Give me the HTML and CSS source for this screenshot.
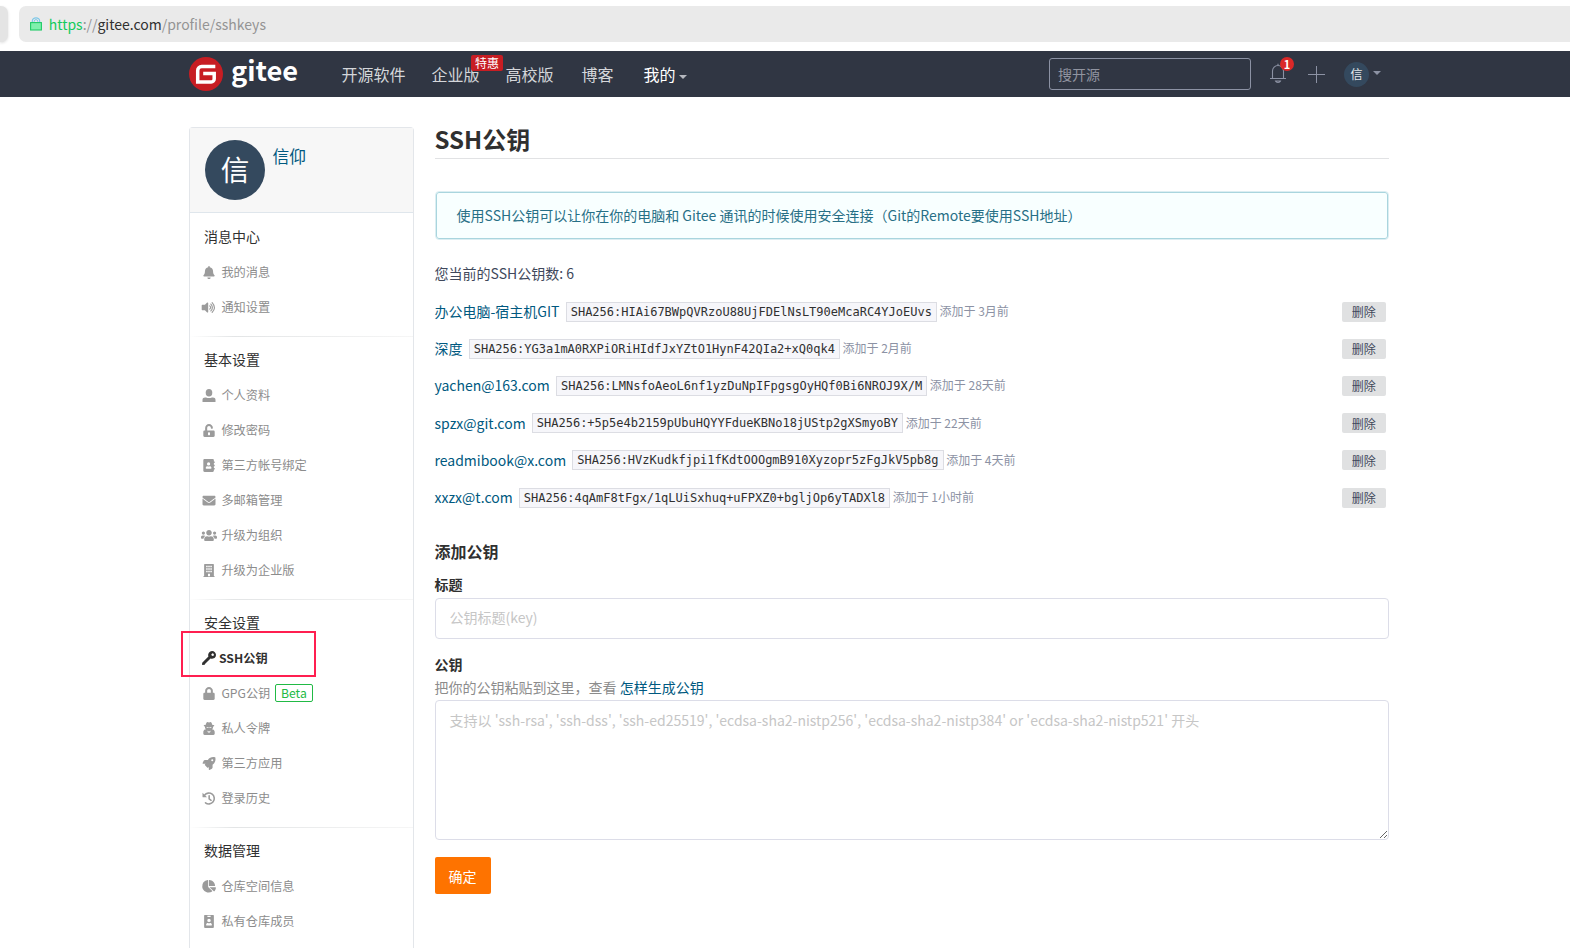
FILE: index.html
```html
<!DOCTYPE html>
<html lang="zh-CN">
<head>
<meta charset="utf-8">
<title>SSH公钥 - Gitee</title>
<link rel="stylesheet" href="styles.css">
</head>
<body>
<div class="browser">
  <div class="browser-tab"></div>
  <div class="address">
    <svg class="address-lock" viewBox="0 0 12 14"><path d="M2.300 6V4.200a3.700 3.400 0 0 1 7.400 0V6" fill="none" stroke="#7fc8e8" stroke-width="1.200"/><path d="M4.200 6V4.400a1.800 1.800 0 0 1 3.600 0V6" fill="none" stroke="#7fc8e8" stroke-width="1"/><rect x=".6" y="5.600" width="10.800" height="7.400" fill="#7ff0ac" stroke="#1fcb66" stroke-width="1.100"/></svg>
    <span class="url"><span class="url-scheme">https</span>://<span class="url-host">gitee.com</span>/profile/sshkeys</span>
  </div>
</div>
<header class="nav">
  <div class="nav-inner">
    <svg class="logo-mark" viewBox="0 0 34 34"><circle cx="17" cy="17" r="17" fill="#c71d23"/><path d="M26.300 9.600H12.700a4 4 0 0 0-4 4v11.300h13.500a3 3 0 0 0 3-3v-5.300H14.200" fill="none" stroke="#fff" stroke-width="3.500"/></svg>
    <span class="logo-text">gitee</span>
    <nav class="menu">
      <a class="menu-item">开源软件</a>
      <a class="menu-item">企业版<span class="promo">特惠</span></a>
      <a class="menu-item">高校版</a>
      <a class="menu-item">博客</a>
      <a class="menu-item menu-mine">我的<i class="caret"></i></a>
    </nav>
    <div class="search">搜开源</div>
    <div class="bell">
      <svg viewBox="0 0 18 22" width="18" height="22"><path d="M1 16.500h16M3.500 16.500V9a5.500 5.500 0 0 1 11 0v7.500M9 3.500V1.800M6.500 19a2.600 2 0 0 0 5 0z" fill="none" stroke="#8c92a4" stroke-width="1.100"/></svg>
      <span class="bell-count">1</span>
    </div>
    <svg class="plus" viewBox="0 0 17 17"><path d="M0 8.500h17M8.500 0v17" stroke="#8c92a4" stroke-width="1"/></svg>
    <span class="nav-avatar">信</span><i class="caret caret-dim"></i>
  </div>
</header>
<div class="page">
  <aside class="sidebar">
    <div class="profile"><span class="avatar">信</span><a class="profile-name">信仰</a></div>
    <section class="group">
      <h2>消息中心</h2>
      <a class="item"><svg class="icon" viewBox="0 0 448 512"><path d="M224 512c35.320 0 63.970-28.650 63.970-64H160.030c0 35.350 28.650 64 63.970 64zm215.390-149.710c-19.320-20.760-55.470-51.990-55.470-154.290 0-77.700-54.480-139.900-127.940-155.160V32c0-17.670-14.320-32-31.980-32s-31.980 14.330-31.980 32v20.840C118.560 68.100 64.080 130.300 64.080 208c0 102.300-36.150 133.530-55.470 154.290-6 6.450-8.660 14.160-8.610 21.710.11 16.400 12.980 32 32.100 32h383.800c19.120 0 32-15.600 32.100-32 .05-7.550-2.610-15.270-8.610-21.710z"/></svg>我的消息</a>
      <a class="item"><svg class="icon" viewBox="0 0 576 512"><path d="M0 176v160c0 13 11 24 24 24h103l88 89c15 15 41 4 41-17V80c0-21-26-32-41-17l-88 89H24c-13 0-24 11-24 24z"/><path d="M318 190q66 66 0 132M362 120q118 136 0 272M412 62q176 194 0 388" fill="none" stroke="currentColor" stroke-width="44" stroke-linecap="round"/></svg>通知设置</a>
    </section>
    <section class="group">
      <h2>基本设置</h2>
      <a class="item"><svg class="icon" viewBox="0 0 512 512"><ellipse cx="256" cy="150" rx="130" ry="150"/><path d="M0 512v-90c0-55 45-90 100-90h40c70 32 162 32 232 0h40c55 0 100 35 100 90v90z"/></svg>个人资料</a>
      <a class="item"><svg class="icon" viewBox="0 0 448 512"><path fill-rule="evenodd" d="M400 256H152V152.900c0-39.600 31.700-72.500 71.300-72.900 40-.4 72.700 32.100 72.700 72v8c0 13.300 10.700 24 24 24h32c13.300 0 24-10.700 24-24v-8C376 68 307.500-.3 223.500 0 139.500.3 72 69.500 72 153.500V256H48c-26.500 0-48 21.500-48 48v160c0 26.500 21.500 48 48 48h352c26.500 0 48-21.500 48-48V304c0-26.500-21.500-48-48-48zM264 408c0 22-18 40-40 40s-40-18-40-40v-48c0-22 18-40 40-40s40 18 40 40z"/></svg>修改密码</a>
      <a class="item"><svg class="icon" viewBox="0 0 448 512"><path fill-rule="evenodd" d="M436 160c7 0 12-5 12-12v-40c0-7-5-12-12-12h-20V48c0-27-21-48-48-48H48C21 0 0 21 0 48v416c0 27 21 48 48 48h320c27 0 48-21 48-48v-48h20c7 0 12-5 12-12v-40c0-7-5-12-12-12h-20v-64h20c7 0 12-5 12-12v-40c0-7-5-12-12-12h-20v-64zM208 128a64 64 0 1 1 0 128 64 64 0 0 1 0-128zm112 237c0 11-10 19-22 19H118c-12 0-22-8-22-19v-19c0-32 30-58 67-58 30 12 60 12 90 0 37 0 67 26 67 58z"/></svg>第三方帐号绑定</a>
      <a class="item"><svg class="icon" viewBox="0 0 512 512"><path d="M502.300 190.800c3.900-3.100 9.700-.2 9.700 4.700V400c0 26.500-21.500 48-48 48H48c-26.500 0-48-21.500-48-48V195.600c0-5 5.700-7.800 9.700-4.700 22.400 17.400 52.100 39.500 154.100 113.600 21.100 15.400 56.700 47.800 92.200 47.600 35.700.3 72-32.800 92.300-47.600 102-74.100 131.600-96.300 154-113.700zM256 320c23.200.4 56.600-29.200 73.400-41.400 132.700-96.300 142.800-104.700 173.400-128.700 5.800-4.500 9.200-11.500 9.200-18.900v-19c0-26.500-21.500-48-48-48H48c-26.500 0-48 21.500-48 48v19c0 7.400 3.400 14.300 9.200 18.900 30.600 23.900 40.700 32.400 173.400 128.700 16.800 12.200 50.200 41.800 73.400 41.400z"/></svg>多邮箱管理</a>
      <a class="item"><svg class="icon" viewBox="0 0 640 512"><path d="M96 224c35.300 0 64-28.700 64-64s-28.700-64-64-64-64 28.700-64 64 28.700 64 64 64zm448 0c35.300 0 64-28.700 64-64s-28.700-64-64-64-64 28.700-64 64 28.700 64 64 64zm32 32h-64c-17.600 0-33.500 7.100-45.100 18.600 40.300 22.100 68.900 62 75.100 109.400h66c17.700 0 32-14.300 32-32v-32c0-35.300-28.700-64-64-64zm-256 0c61.900 0 112-50.100 112-112S381.900 32 320 32 208 82.100 208 144s50.100 112 112 112zm76.800 32h-8.300c-20.800 10-43.900 16-68.500 16s-47.600-6-68.500-16h-8.300C179.600 288 128 339.600 128 403.200V432c0 26.500 21.500 48 48 48h288c26.500 0 48-21.500 48-48v-28.800c0-63.600-51.600-115.200-115.200-115.200zm-223.700-13.400C161.500 263.100 145.600 256 128 256H64c-35.300 0-64 28.700-64 64v32c0 17.700 14.300 32 32 32h65.900c6.300-47.400 34.900-87.300 75.200-109.400z"/></svg>升级为组织</a>
      <a class="item"><svg class="icon" viewBox="0 0 448 512"><path fill-rule="evenodd" d="M436 480h-20V24c0-13-11-24-24-24H56C43 0 32 11 32 24v456H12c-7 0-12 5-12 12v20h448v-20c0-7-5-12-12-12zM112 72h60v56h-60zm82 0h60v56h-60zm82 0h60v56h-60zM112 168h60v56h-60zm82 0h60v56h-60zm82 0h60v56h-60zM112 264h60v56h-60zm82 0h60v56h-60zm82 0h60v56h-60zM184 384h80v96h-80z"/></svg>升级为企业版</a>
    </section>
    <section class="group">
      <h2>安全设置</h2>
      <a class="item item-active"><svg class="icon" viewBox="0 0 512 512"><path fill-rule="evenodd" d="M470 42c52 52 56 132 12 188-42 52-112 64-170 42L118 466l-20 38-82 8-16-16 8-62 226-230C212 146 228 82 278 38c58-48 140-46 192 4zM362 96a46 46 0 1 0 64 64 46 46 0 0 0-64-64z"/></svg>SSH公钥</a>
      <a class="item"><svg class="icon" viewBox="0 0 448 512"><path d="M400 224h-24v-72C376 68.200 307.800 0 224 0S72 68.200 72 152v72H48c-26.500 0-48 21.500-48 48v192c0 26.500 21.500 48 48 48h352c26.500 0 48-21.500 48-48V272c0-26.500-21.500-48-48-48zm-104 0H152v-72c0-39.700 32.300-72 72-72s72 32.300 72 72v72z"/></svg>GPG公钥<span class="beta">Beta</span></a>
      <a class="item"><svg class="icon" viewBox="0 0 448 512"><path fill-rule="evenodd" d="M16 144c0-18 48-28 80-34C108 62 130 0 160 0c22 0 38 16 64 16S266 0 288 0c30 0 52 62 64 110 32 6 80 16 80 34 0 16-22 28-48 36v24c0 30-12 52-30 68l-4 20h28c40 12 70 54 70 96v76c0 26-22 48-48 48H48c-26 0-48-22-48-48v-76c0-42 30-84 66-96h30l-4-20c-16-16-28-38-28-68v-24c-26-8-48-20-48-36zm106 66c14 22 70 24 86-6h32c16 30 72 28 86 6v-16H122zm38 136 34 100 24-60-18-34zm128 0-40 6-18 34 24 60z"/></svg>私人令牌</a>
      <a class="item"><svg class="icon" viewBox="0 0 512 512"><path fill-rule="evenodd" d="M505 20c-1-7-6-11-13-13-115-24-205 6-282 108H94c-16 0-35 11-42 26L3 238c-7 14 1 26 17 26h102l-22 22c-11 11-12 31 0 42l84 84c12 12 31 12 42 0l22-22v102c0 16 12 24 26 17l97-49c15-7 26-26 26-42V302C499 225 529 135 505 20zM384 168a40 40 0 1 1 0-80 40 40 0 0 1 0 80z"/></svg>第三方应用</a>
      <a class="item"><svg class="icon" viewBox="0 0 512 512"><path d="M80 125A214 214 0 1 1 118 424M262 145v122l76 58" fill="none" stroke="currentColor" stroke-width="62" stroke-linecap="round"/><path d="M0 32v152c0 13 11 24 24 24h152z"/></svg>登录历史</a>
    </section>
    <section class="group group-last">
      <h2>数据管理</h2>
      <a class="item"><svg class="icon" viewBox="0 0 544 512"><path d="M240 272V16c0-9-8-17-17-16A240 240 0 0 0 6 279c19 125 128 221 254 217 49-2 95-18 133-44 8-6 8-17 1-24z"/><path d="M544 288H290l170 158c6 6 16 7 23 1 33-31 55-75 61-141 1-10-7-18-16-18zM512 223C504 105 407 8 289 0c-9 0-17 7-17 16v224h224c9 0 17-8 16-17z"/></svg>仓库空间信息</a>
      <a class="item"><svg class="icon" viewBox="0 0 448 512"><path fill-rule="evenodd" d="M384 0H64C37 0 32 21 32 48v416c0 27 5 48 32 48h320c27 0 32-21 32-48V48c0-27-5-48-32-48zM160 32h128v48H160zm64 112a68 68 0 1 1 0 136 68 68 0 0 1 0-136zm112 250c0 12-10 22-22 22H134c-12 0-22-10-22-22v-22c0-34 30-60 67-60 30 12 60 12 90 0 37 0 67 26 67 60z"/></svg>私有仓库成员</a>
    </section>
    <div class="marker"></div>
  </aside>
  <main class="main">
    <h1>SSH公钥</h1>
    <div class="notice">使用SSH公钥可以让你在你的电脑和 Gitee 通讯的时候使用安全连接（Git的Remote要使用SSH地址）</div>
    <p class="count">您当前的SSH公钥数: 6</p>
    <ul class="keys">
      <li><a>办公电脑-宿主机GIT</a><code>SHA256:HIAi67BWpQVRzoU88UjFDElNsLT90eMcaRC4YJoEUvs</code><span class="when">添加于 3月前</span><button>删除</button></li>
      <li><a>深度</a><code>SHA256:YG3a1mA0RXPiORiHIdfJxYZtO1HynF42QIa2+xQ0qk4</code><span class="when">添加于 2月前</span><button>删除</button></li>
      <li><a>yachen@163.com</a><code>SHA256:LMNsfoAeoL6nf1yzDuNpIFpgsgOyHQf0Bi6NROJ9X/M</code><span class="when">添加于 28天前</span><button>删除</button></li>
      <li><a>spzx@git.com</a><code>SHA256:+5p5e4b2159pUbuHQYYFdueKBNo18jUStp2gXSmyoBY</code><span class="when">添加于 22天前</span><button>删除</button></li>
      <li><a>readmibook@x.com</a><code>SHA256:HVzKudkfjpi1fKdtOOOgmB910Xyzopr5zFgJkV5pb8g</code><span class="when">添加于 4天前</span><button>删除</button></li>
      <li><a>xxzx@t.com</a><code>SHA256:4qAmF8tFgx/1qLUiSxhuq+uFPXZ0+bgljOp6yTADXl8</code><span class="when">添加于 1小时前</span><button>删除</button></li>
    </ul>
    <form class="form">
      <h3>添加公钥</h3>
      <label>标题</label>
      <input type="text" placeholder="公钥标题(key)">
      <label class="label-key">公钥</label>
      <p class="help">把你的公钥粘贴到这里，查看 <a>怎样生成公钥</a></p>
      <textarea placeholder="支持以 'ssh-rsa', 'ssh-dss', 'ssh-ed25519', 'ecdsa-sha2-nistp256', 'ecdsa-sha2-nistp384' or 'ecdsa-sha2-nistp521' 开头"></textarea>
      <button class="submit" type="button">确定</button>
    </form>
  </main>
</div>
</body>
</html>
```

FILE: styles.css
```css
* { box-sizing: border-box; }
body {
  margin: 0;
  height: 948px;
  overflow: hidden;
  background: #fff;
  color: #40485b;
  font: 14px/20px "Noto Sans CJK SC", sans-serif;
}
h1, h2, h3, p, ul { margin: 0; padding: 0; }
button, input, textarea { font-family: inherit; }

.browser { display: flex; height: 51px; padding-top: 6px; gap: 11px; }
.browser-tab { width: 8px; height: 36px; background: #e4e4e4; border-radius: 0 7px 7px 0; box-shadow: 0 1px 3px #ddd; }
.address { flex: 1; display: flex; align-items: center; height: 36px; padding-left: 10.5px; background: #eaeaea; border-radius: 7px 0 0 7px; }
.address-lock { width: 12px; height: 14px; }
.url { margin-left: 7.2px; color: #949494; }
.url-scheme { color: #14cb5c; }
.url-host { color: #303030; }

.nav { height: 46px; background: #303643; }
.nav-inner { display: flex; align-items: center; height: 46px; margin-left: 189px; width: 1200px; }
.logo-mark { width: 34px; height: 34px; }
.logo-text { width: 110.4px; margin-left: 8px; padding-bottom: 10px; color: #fff; font-size: 27.2px; font-weight: 700; line-height: 36px; }
.menu { display: flex; flex: 1; color: #d4d6da; font-size: 16px; line-height: 45px; }
.menu-item { position: relative; margin-right: 26px; }
.menu-item:nth-child(3) { margin-right: 28px; }
.menu-item:nth-child(4) { margin-right: 30px; }
.menu-mine { color: #fff; }
.promo { position: absolute; left: 39.5px; top: 3px; width: 32px; height: 16px; border-radius: 2px; background: #c71d23; color: #fff; font-size: 12px; line-height: 15px; text-align: center; }
.caret { display: inline-block; border: 4px solid transparent; border-top-color: #b5b8bf; border-bottom: 0; margin-left: 4px; vertical-align: 2px; }
.search { width: 202px; height: 32px; padding-left: 8px; border: 1px solid #8c92a4; border-radius: 3px; color: #9094a0; font-size: 14px; line-height: 30px; }
.bell { position: relative; height: 22px; margin-left: 18px; }
.bell svg { display: block; margin-top: -1px; }
.bell-count { position: absolute; left: 11px; top: -6px; width: 14px; height: 14px; border-radius: 50%; background: #db2828; color: #fff; font-size: 11px; font-weight: 700; line-height: 14px; text-align: center; }
.plus { width: 17px; height: 17px; margin-left: 21px; }
.nav-avatar { width: 25px; height: 25px; margin-left: 19px; border-radius: 50%; background: #34495e; color: #e4e7ea; font-size: 12px; line-height: 24px; text-align: center; }
.caret-dim { border-top-color: #8c92a4; margin: 0 8.5px 2px 3.5px; }

.page { display: flex; margin-left: 189px; width: 1200px; padding-top: 30px; }
.sidebar { position: relative; width: 225px; height: 821px; border: 1px solid #e3e6ea; border-bottom: 0; border-radius: 4px 4px 0 0; flex: none; }
.profile { display: flex; height: 85px; padding: 12px 15px; background: #f7f7f7; border-bottom: 1px solid #dfe6ec; }
.avatar { width: 60px; height: 60px; border-radius: 50%; background: #34495e; color: #fff; font-size: 28.6px; line-height: 58px; text-align: center; }
.profile-name { margin: 4px 0 0 7.5px; color: #005980; font-size: 16.8px; line-height: 24px; }
.group { padding: 5px 0 12px 14px; border-bottom: 1px solid; border-image: linear-gradient(90deg, #fff, #e3e5e6 20%, #f6f6f6) 1; }
.profile + .group { padding-top: 6px; }
.group-last { padding-bottom: 0; border-bottom: 0; }
.group h2 { color: #303030; font-size: 14px; font-weight: 400; line-height: 35px; }
.item { display: flex; align-items: center; height: 35px; color: #8c8c8c; font-size: 12.2px; }
.icon { width: 16px; height: 13px; margin: 1px 4.2px 0 -2.8px; fill: #9b9b9b; color: #9b9b9b; overflow: visible; }
.item-active { color: #303030; font-weight: 700; }
.item-active .icon { width: 14px; height: 14px; margin: 0 3px 0 -2px; fill: #303030; }
.beta { margin-left: 4.6px; width: 38px; height: 18px; border: 1px solid #21ba45; border-radius: 2px; color: #21ba45; line-height: 16px; text-align: center; }
.marker { position: absolute; left: -9px; top: 503px; width: 135px; height: 46px; border: 2px solid #ff1f50; }

.main { flex: 1; margin-left: 20.5px; }
.main h1 { height: 32px; border-bottom: 1px solid #e1e2e4; color: #303030; font-size: 24px; line-height: 23px; }
.notice { height: 49px; margin-top: 32px; padding-left: 21px; border: 1px solid #dceef2; border-radius: 4px; box-shadow: 0 0 0 1px #a9d5de inset; background: #f8ffff; color: #276f86; line-height: 47px; }
.count { margin-top: 22px; line-height: 22px; }
.keys { list-style: none; margin-top: 9px; }
.keys li { display: flex; align-items: center; height: 37.2px; padding-right: 3.2px; }
.keys a, .help a { color: #005980; }
.keys li > a { padding-bottom: 1px; }
.keys code { height: 20px; margin-left: 6.2px; padding: 0 4px; border: 1px solid #dcdde3; background: #f6f6fa; color: #303030; font: 12px/18px "DejaVu Sans Mono", monospace; }
.when { margin-left: 2.6px; padding-bottom: 1px; color: #8c92a4; font-size: 12px; }
.keys button { width: 44px; height: 20px; margin-left: auto; padding: 0; border: 0; border-radius: 2px; background: #e0e1e2; color: #40485b; font-size: 12px; line-height: 17px; }
.form { padding-top: 22.8px; }
.form h3 { color: #303030; font-size: 16px; line-height: 24px; margin-bottom: 11px; }
.form label { display: block; color: #303030; font-weight: 700; line-height: 20px; }
.form input, .form textarea { display: block; width: 954px; border: 1px solid #dcdde8; border-radius: 4px; padding: 0 14px; font-size: 14px; outline: 0; background: #fff; }
.form input { height: 41px; margin-top: 4px; padding-bottom: 2px; }
.form textarea { height: 140px; padding-top: 8px; line-height: 22px; margin-top: 2px; }
.form ::placeholder { color: #c6c6c6; }
.form .label-key { margin-top: 15px; }
.help { color: #8c8c8c; line-height: 22px; margin-top: 2px; }
.submit { width: 56px; height: 37px; margin-top: 17px; padding: 1px 0 0; border: 0; border-radius: 2px; background: #fe7300; color: #fff; font-size: 14px; }
```
